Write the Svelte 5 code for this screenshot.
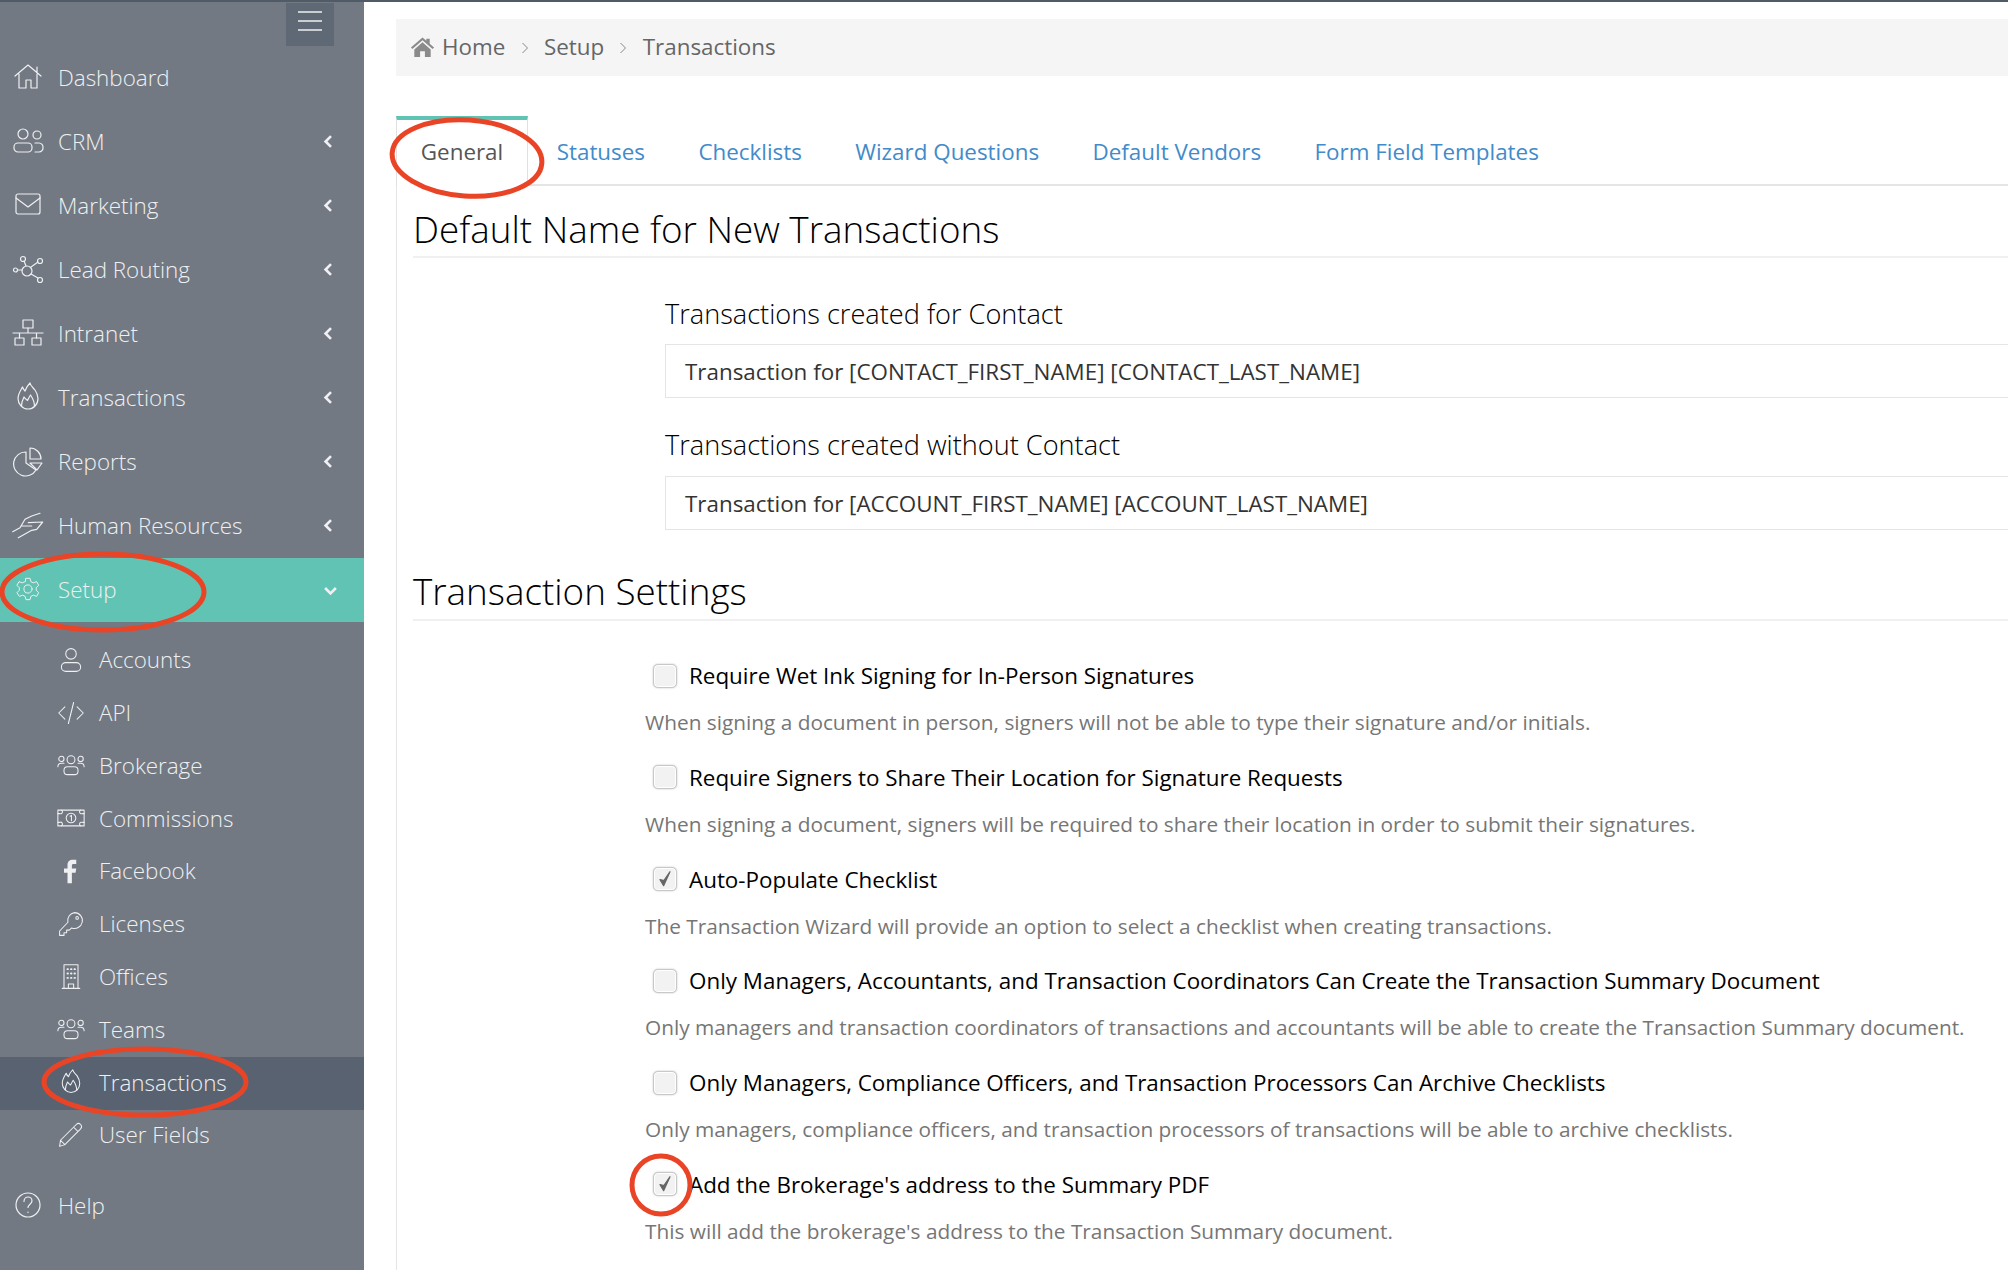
<script>
  const top = [
    { t: 'Dashboard', i: 'home' }, { t: 'CRM', i: 'users', c: 1 }, { t: 'Marketing', i: 'mail', c: 1 },
    { t: 'Lead Routing', i: 'route', c: 1 }, { t: 'Intranet', i: 'net', c: 1 }, { t: 'Transactions', i: 'fire', c: 1 },
    { t: 'Reports', i: 'pie', c: 1 }, { t: 'Human Resources', i: 'hands', c: 1 }
  ];
  const sub = [
    { t: 'Accounts', i: 'user' }, { t: 'API', i: 'code' }, { t: 'Brokerage', i: 'group' }, { t: 'Commissions', i: 'money' },
    { t: 'Facebook', i: 'fb' }, { t: 'Licenses', i: 'key' }, { t: 'Offices', i: 'office' }, { t: 'Teams', i: 'group' },
    { t: 'Transactions', i: 'fire', active: 1 }, { t: 'User Fields', i: 'pen' }
  ];
  const tabs = ['General', 'Statuses', 'Checklists', 'Wizard Questions', 'Default Vendors', 'Form Field Templates'];
  const settings = [
    { l: 'Require Wet Ink Signing for In-Person Signatures', d: 'When signing a document in person, signers will not be able to type their signature and/or initials.' },
    { l: 'Require Signers to Share Their Location for Signature Requests', d: 'When signing a document, signers will be required to share their location in order to submit their signatures.' },
    { l: 'Auto-Populate Checklist', d: 'The Transaction Wizard will provide an option to select a checklist when creating transactions.', on: 1 },
    { l: 'Only Managers, Accountants, and Transaction Coordinators Can Create the Transaction Summary Document', d: 'Only managers and transaction coordinators of transactions and accountants will be able to create the Transaction Summary document.' },
    { l: 'Only Managers, Compliance Officers, and Transaction Processors Can Archive Checklists', d: 'Only managers, compliance officers, and transaction processors of transactions will be able to archive checklists.' },
    { l: "Add the Brokerage's address to the Summary PDF", d: "This will add the brokerage's address to the Transaction Summary document.", on: 1 }
  ];
</script>

{#snippet icon(n)}
  <svg class="ic" viewBox="0 0 32 32" fill="none" stroke="currentColor" stroke-width="1.2" stroke-linecap="round" stroke-linejoin="round">
    {#if n === 'home'}
      <path d="M3 15 16 4l13 11M25 11V6M7 13v14h7v-8h5v8h6V13" />
    {:else if n === 'users'}
      <circle cx="11" cy="9" r="5" /><circle cx="25" cy="10" r="4" /><rect x="2" y="18" width="18" height="9" rx="4" /><path d="M23 18h4a4 4 0 0 1 4 4.500 4 4 0 0 1-4 4.500h-4" />
    {:else if n === 'mail'}
      <rect x="4" y="5" width="24" height="20" rx="2" /><path d="M4 9l12 9 12-9" />
    {:else if n === 'route'}
      <circle cx="3.500" cy="17" r="2" /><circle cx="11" cy="6" r="2.500" /><circle cx="28" cy="8" r="2.500" /><circle cx="28" cy="27" r="2.500" /><circle cx="15" cy="18" r="5" /><path d="M6 17h4M12 8l2 5M19 14l7-5M19 21l7 4" />
    {:else if n === 'net'}
      <rect x="11" y="3" width="10" height="8" /><rect x="3" y="21" width="9" height="7" /><rect x="20" y="21" width="9" height="7" /><path d="M16 11v5M1 16h30M7.500 16v5M24.500 16v5" />
    {:else if n === 'fire'}
      <path d="M10.500 6c.5 2 1.500 3 2.500 4 1-3 3-6 5-8 .5 3 3 4.500 5 7 2 3 3 5.500 3 8.500 0 6-4.500 10.500-10 10.500S6 23 6 17.500c0-4.500 2.500-8 4.500-11.500z" /><path d="M9.500 25c0-3 1-6 2.500-9 1 1.500 2 2.500 3.500 3.500 1-2 2-4 3-5.500 2 3 4 6 4 11" />
    {:else if n === 'pie'}
      <path d="M14 7A12 12 0 1 0 24 25L14 18z" /><path d="M18 3a11 11 0 0 1 11 11H18z" /><path d="M18 18h12l-5 7z" />
    {:else if n === 'hands'}
      <path d="M.7 22.700 8 18.700l5-8.400L19.700 7 28 4.300M16.300 13.700 30.700 13l-6 7.300-5 1-13.400 7.400M9.700 17h10" />
    {:else if n === 'gear'}
      <g transform="translate(16 16) scale(.82) translate(-16 -16)">
        <path d="M13.500 3h5l1 4 3 1.500 4-1.500 2.500 4.500-3 3v3l3 3-2.500 4.500-4-1.500-3 1.500-1 4h-5l-1-4-3-1.500-4 1.500L2.500 20.500l3-3v-3l-3-3L5 7l4 1.500L12.500 7z" /><circle cx="16" cy="16" r="5" />
      </g>
    {:else if n === 'user'}
      <circle cx="16" cy="9" r="6" /><rect x="5" y="19" width="22" height="10" rx="5" />
    {:else if n === 'code'}
      <path d="M9 9l-7 7 7 7M23 9l7 7-7 7M19 4l-6 24" />
    {:else if n === 'group'}
      <circle cx="16" cy="10" r="4.500" /><circle cx="5" cy="9" r="3" /><circle cx="27" cy="9" r="3" /><rect x="8" y="18" width="16" height="9" rx="4" /><path d="M1 18c0-3 2-4 4-4h3M31 18c0-3-2-4-4-4h-3" />
    {:else if n === 'money'}
      <rect x="1" y="7" width="30" height="18" /><circle cx="16" cy="16" r="5.500" /><path d="M1 11h2a2 2 0 0 0 2-4M31 11h-2a2 2 0 0 1-2-4M1 21h2a2 2 0 0 1 2 4M31 21h-2a2 2 0 0 0-2 4M15 14l1.500-1v6" />
    {:else if n === 'fb'}
      <path fill="currentColor" stroke="none" d="M12 30V18H8v-5h4V9c0-4 2.500-6 6-6h4v5h-3c-1.500 0-2 .7-2 2v3h5l-.8 5H17v12z" />
    {:else if n === 'key'}
      <path d="M20 3a9 9 0 0 1 8.800 11 9 9 0 0 1-12 6.500L14 23h-3v3H8v3H3v-5L12.500 14A9 9 0 0 1 20 3z" /><circle cx="23" cy="9" r="1.500" />
    {:else if n === 'office'}
      <path d="M8 2h16v27H8zM6 29h20M13 29v-5h6v5" /><path stroke-width="2.200" d="M12 7h.5M16 7h.5M20 7h.5M12 12h.5M16 12h.5M20 12h.5M12 17h.5M16 17h.5M20 17h.5" />
    {:else if n === 'pen'}
      <path d="M4 22 22 4c2-2 4-1 5 0s2 3 0 5L9 27l-6 2zM4 22l5 5M19 7l5 5" />
    {:else if n === 'help'}
      <circle cx="16" cy="16" r="12" /><path d="M12 12.500c0-3 2-4.500 4-4.500s4 1.500 4 4c0 3-4 3.500-4 6.500M16 23v.5" />
    {/if}
  </svg>
{/snippet}

<div class="page">
  <aside class="side">
    <div class="burger-row">
      <button class="burger" aria-label="Menu"><i></i><i></i><i></i></button>
    </div>
    <nav class="nav">
      {#each top as n}
        <div class="row">
          <span class="ico">{@render icon(n.i)}</span><span class="txt">{n.t}</span>
          {#if n.c}<svg class="chev" viewBox="0 0 10 14"><path d="M7.500 2.500 3 7l4.500 4.500" /></svg>{/if}
        </div>
      {/each}
      <div class="row open">
        <span class="ico">{@render icon('gear')}</span><span class="txt">Setup</span>
        <svg class="chev down" viewBox="0 0 14 10"><path d="M2.500 2.500 7 7l4.500-4.500" /></svg>
      </div>
      <div class="sub">
        {#each sub as s}
          <div class="subrow" class:active={s.active}>
            <span class="ico sm">{@render icon(s.i)}</span><span class="txt">{s.t}</span>
          </div>
        {/each}
      </div>
      <div class="row help"><span class="ico">{@render icon('help')}</span><span class="txt">Help</span></div>
    </nav>
  </aside>

  <main class="main">
    <div class="crumbs">
      <svg class="crumb-home" viewBox="0 0 26 22"><path fill="#8a8a8a" d="M13 1 1 11.500l1.500 1.500L13 4l10.500 9 1.500-1.500L20.500 7.500V2.500h-3.500v2zM4.500 13.500V21.500h6v-6h5v6h6v-8L13 6z" /></svg>
      <span>Home</span>
      <svg class="sep" viewBox="0 0 8 14"><path d="M1.500 2 6.500 7l-5 5" /></svg>
      <span>Setup</span>
      <svg class="sep" viewBox="0 0 8 14"><path d="M1.500 2 6.500 7l-5 5" /></svg>
      <span>Transactions</span>
    </div>

    <div class="tabs">
      {#each tabs as t, i}
        <div class="tab" class:on={i === 0}>{t}</div>
      {/each}
    </div>

    <div class="panel">
      <h3 class="first">Default Name for New Transactions</h3>
      <div class="fields">
        <div class="flabel">Transactions created for Contact</div>
        <div class="input">Transaction for [CONTACT_FIRST_NAME] [CONTACT_LAST_NAME]</div>
        <div class="flabel second">Transactions created without Contact</div>
        <div class="input">Transaction for [ACCOUNT_FIRST_NAME] [ACCOUNT_LAST_NAME]</div>
      </div>
      <h3 class="settings-h">Transaction Settings</h3>
      <div class="settings">
        {#each settings as s}
          <div class="setting">
            <div class="check-line">
              <span class="box">
                {#if s.on}<svg viewBox="0 0 20 20"><path d="M5.500 10.500 8.800 16 14.500 3.500 9 11.500z" fill="#666" stroke="#666" stroke-width="1.200" stroke-linejoin="round" /></svg>{/if}
              </span>
              <span class="label">{s.l}</span>
            </div>
            <p class="desc">{s.d}</p>
          </div>
        {/each}
      </div>
    </div>
  </main>

  <svg class="marks" viewBox="0 0 2008 1270" fill="none" stroke="#ea4427" stroke-width="5" aria-hidden="true">
    <ellipse cx="467" cy="158" rx="75" ry="38" transform="rotate(4 467 158)" />
    <ellipse cx="103" cy="592" rx="101" ry="38" />
    <ellipse cx="145" cy="1082" rx="101" ry="33" />
    <circle cx="661" cy="1185" r="29" />
  </svg>
</div>

<style>
  :global(body) { margin: 0; background: #fff; overflow: hidden; }
  .page {
    position: relative; display: flex; width: 2008px; height: 1270px; overflow: hidden;
    border-top: 2px solid #4f5b67; box-sizing: border-box;
    font-family: "Open Sans", "Noto Sans", sans-serif; color: #000;
  }
  .side { width: 364px; flex: none; background: #727983; color: #eef0f1; font-weight: 300; font-size: 22.400px; }
  .burger-row { display: flex; justify-content: flex-end; padding-right: 30px; height: 44px; }
  .burger {
    width: 48px; height: 43px; padding: 8px 0 0; border: 0; background: #5e6975; margin-top: 1px;
    display: flex; flex-direction: column; align-items: center; gap: 7px; box-sizing: border-box;
  }
  .burger i { display: block; width: 24px; height: 2px; background: #c9ced3; }
  .row { display: flex; align-items: center; height: 64px; padding: 0 0 2px 12px; position: relative; box-sizing: border-box; }
  .row.open { background: #61c3b3; }
  .row.help { margin-top: 12px; }
  .ico { width: 32px; height: 32px; flex: none; margin-right: 14px; display: block; }
  .ic { width: 100%; height: 100%; display: block; }
  .chev { position: absolute; right: 30px; top: 23px; width: 12px; height: 17px; fill: none; stroke: #eef0f1; stroke-width: 2.200; }
  .chev.down { right: 25px; width: 17px; height: 12px; top: 27px; }
  .sub { padding-top: 12.400px; }
  .subrow { display: flex; align-items: center; height: 52.800px; padding: 0 0 2px 57px; box-sizing: border-box; }
  .subrow.active { background: #596271; }
  .ico.sm { width: 28px; height: 28px; margin-right: 14px; }

  .main { flex: 1; min-width: 0; padding: 17px 0 0 32px; display: flex; flex-direction: column; }
  .crumbs {
    display: flex; align-items: center; height: 57px; background: #f5f5f5; padding: 0 0 2px 14px; box-sizing: border-box;
    font-size: 22.400px; color: #666; font-weight: 400; flex: none;
  }
  .crumb-home { width: 25px; height: 22px; margin-right: 7px; }
  .sep { width: 8px; height: 14px; margin: 2px 15.300px 0; fill: none; stroke: #888; stroke-width: 1; }
  .tabs { display: flex; margin-top: 40px; height: 68px; border-bottom: 2px solid #e5e5e5; box-sizing: content-box; flex: none; }
  .tab { padding: 2px 26.700px 0; display: flex; align-items: center; font-size: 22.400px; color: #428bca; }
  .tab.on {
    width: 132px; box-sizing: border-box; padding: 0 0 4px; justify-content: center; color: #555; margin-right: 2px;
    border-top: 4px solid #61c3b3; border-right: 1px solid #e0e0e0; border-left: 1px solid #e0e0e0;
    background: #fff; margin-bottom: -2px;
  }
  .panel { border-left: 1px solid #e5e5e5; padding-left: 16px; flex: 1; }
  h3 { font-weight: 300; font-size: 36.800px; margin: 0; border-bottom: 2px solid #f0f0f0; }
  .first { padding: 20px 0 4px; line-height: 46px; }
  .fields { padding-left: 252px; padding-top: 36px; }
  .flabel { font-size: 27.150px; line-height: 40px; font-weight: 300; margin-bottom: 10px; }
  .flabel.second { margin-top: 27px; margin-bottom: 11px; }
  .input {
    height: 54px; border: 1px solid #e5e5e5; border-right: 0; box-sizing: border-box; padding-left: 19px; color: #333;
    display: flex; align-items: center; font-size: 22.400px; white-space: nowrap;
  }
  .settings-h { margin-top: 33px; padding: 0; line-height: 56px; }
  .settings { padding-left: 232px; padding-top: 24.500px; }
  .setting { height: 101.800px; }
  .check-line { display: flex; align-items: center; height: 60px; }
  .box {
    width: 24px; height: 24px; margin: 0 12px 0 8px; flex: none; border: 1px solid #c8c8c8; border-radius: 5px;
    background: #f2f2f2; box-shadow: inset 0 0 0 1px #fff, 0 0 2px #c0c0c0; box-sizing: border-box; display: block;
  }
  .box svg { width: 100%; height: 100%; display: block; }
  .label { font-size: 22.400px; white-space: nowrap; }
  .desc { margin: 1.500px 0 0; font-size: 20.800px; color: #767676; white-space: nowrap; line-height: 30px; }
  .marks { position: absolute; left: 0; top: -2px; width: 2008px; height: 1270px; pointer-events: none; }
</style>
